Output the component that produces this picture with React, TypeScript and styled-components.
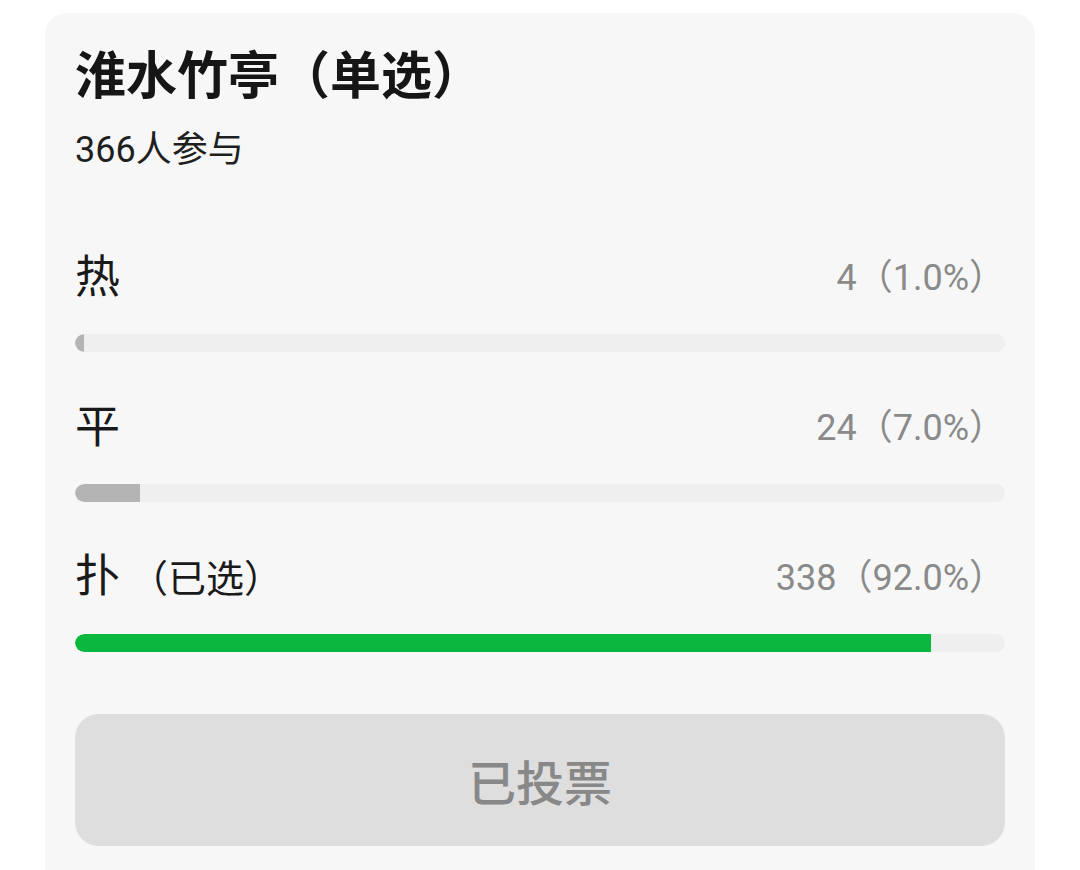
import styled, { createGlobalStyle } from 'styled-components'

const Global = createGlobalStyle`
  html, body {
    margin: 0;
    padding: 0;
    background: #fff;
  }
  body {
    font-family: Roboto, "Noto Sans CJK SC", sans-serif;
  }
`

const Page = styled.div`
  padding: 13px 45px 0;
`

const Card = styled.div`
  background: #f7f7f7;
  border-radius: 22px 22px 0 0;
  padding: 34px 30px 24px;
  min-height: calc(100vh - 13px);
  box-sizing: border-box;
`

const Title = styled.div`
  font-size: 51px;
  line-height: 60px;
  font-weight: 700;
  color: #161616;
`

const Count = styled.div`
  margin-top: 23px;
  font-size: 36px;
  line-height: 40px;
  color: #1f1f1f;
`

const Options = styled.div`
  margin-top: 80px;
  display: flex;
  flex-direction: column;
  gap: 48px;
`

const OptionHead = styled.div`
  display: flex;
  justify-content: space-between;
  align-items: center;
  height: 56px;
`

const Label = styled.div`
  font-size: 45px;
  line-height: 56px;
  color: #1a1a1a;
`

const Picked = styled.span`
  font-size: 38px;
  margin-left: 10px;
`

const Result = styled.div`
  font-size: 36px;
  line-height: 40px;
  color: #8a8a8a;
`

const Track = styled.div`
  margin-top: 28px;
  height: 18px;
  border-radius: 9px;
  background: #efefef;
  overflow: hidden;
`

const Fill = styled.div<{ $selected?: boolean }>`
  height: 100%;
  border-radius: 9px 0 0 9px;
  background: ${p => (p.$selected ? '#09b83e' : '#b4b4b4')};
`

const VotedButton = styled.div`
  margin-top: 62px;
  height: 132px;
  border-radius: 24px;
  background: #dedede;
  color: #888;
  font-size: 48px;
  font-weight: 500;
  display: flex;
  align-items: center;
  justify-content: center;
`

const options = [
  { label: '热', votes: 4, pct: 1.0 },
  { label: '平', votes: 24, pct: 7.0 },
  { label: '扑', votes: 338, pct: 92.0, selected: true },
]

export default function App() {
  return (
    <Page>
      <Global />
      <Card>
        <Title>淮水竹亭（单选）</Title>
        <Count>366人参与</Count>
        <Options>
          {options.map(o => (
            <div key={o.label}>
              <OptionHead>
                <Label>
                  {o.label}
                  {o.selected && <Picked>（已选）</Picked>}
                </Label>
                <Result>
                  {o.votes}（{o.pct.toFixed(1)}%）
                </Result>
              </OptionHead>
              <Track>
                <Fill $selected={o.selected} style={{ width: `${o.pct}%` }} />
              </Track>
            </div>
          ))}
        </Options>
        <VotedButton>已投票</VotedButton>
      </Card>
    </Page>
  )
}
